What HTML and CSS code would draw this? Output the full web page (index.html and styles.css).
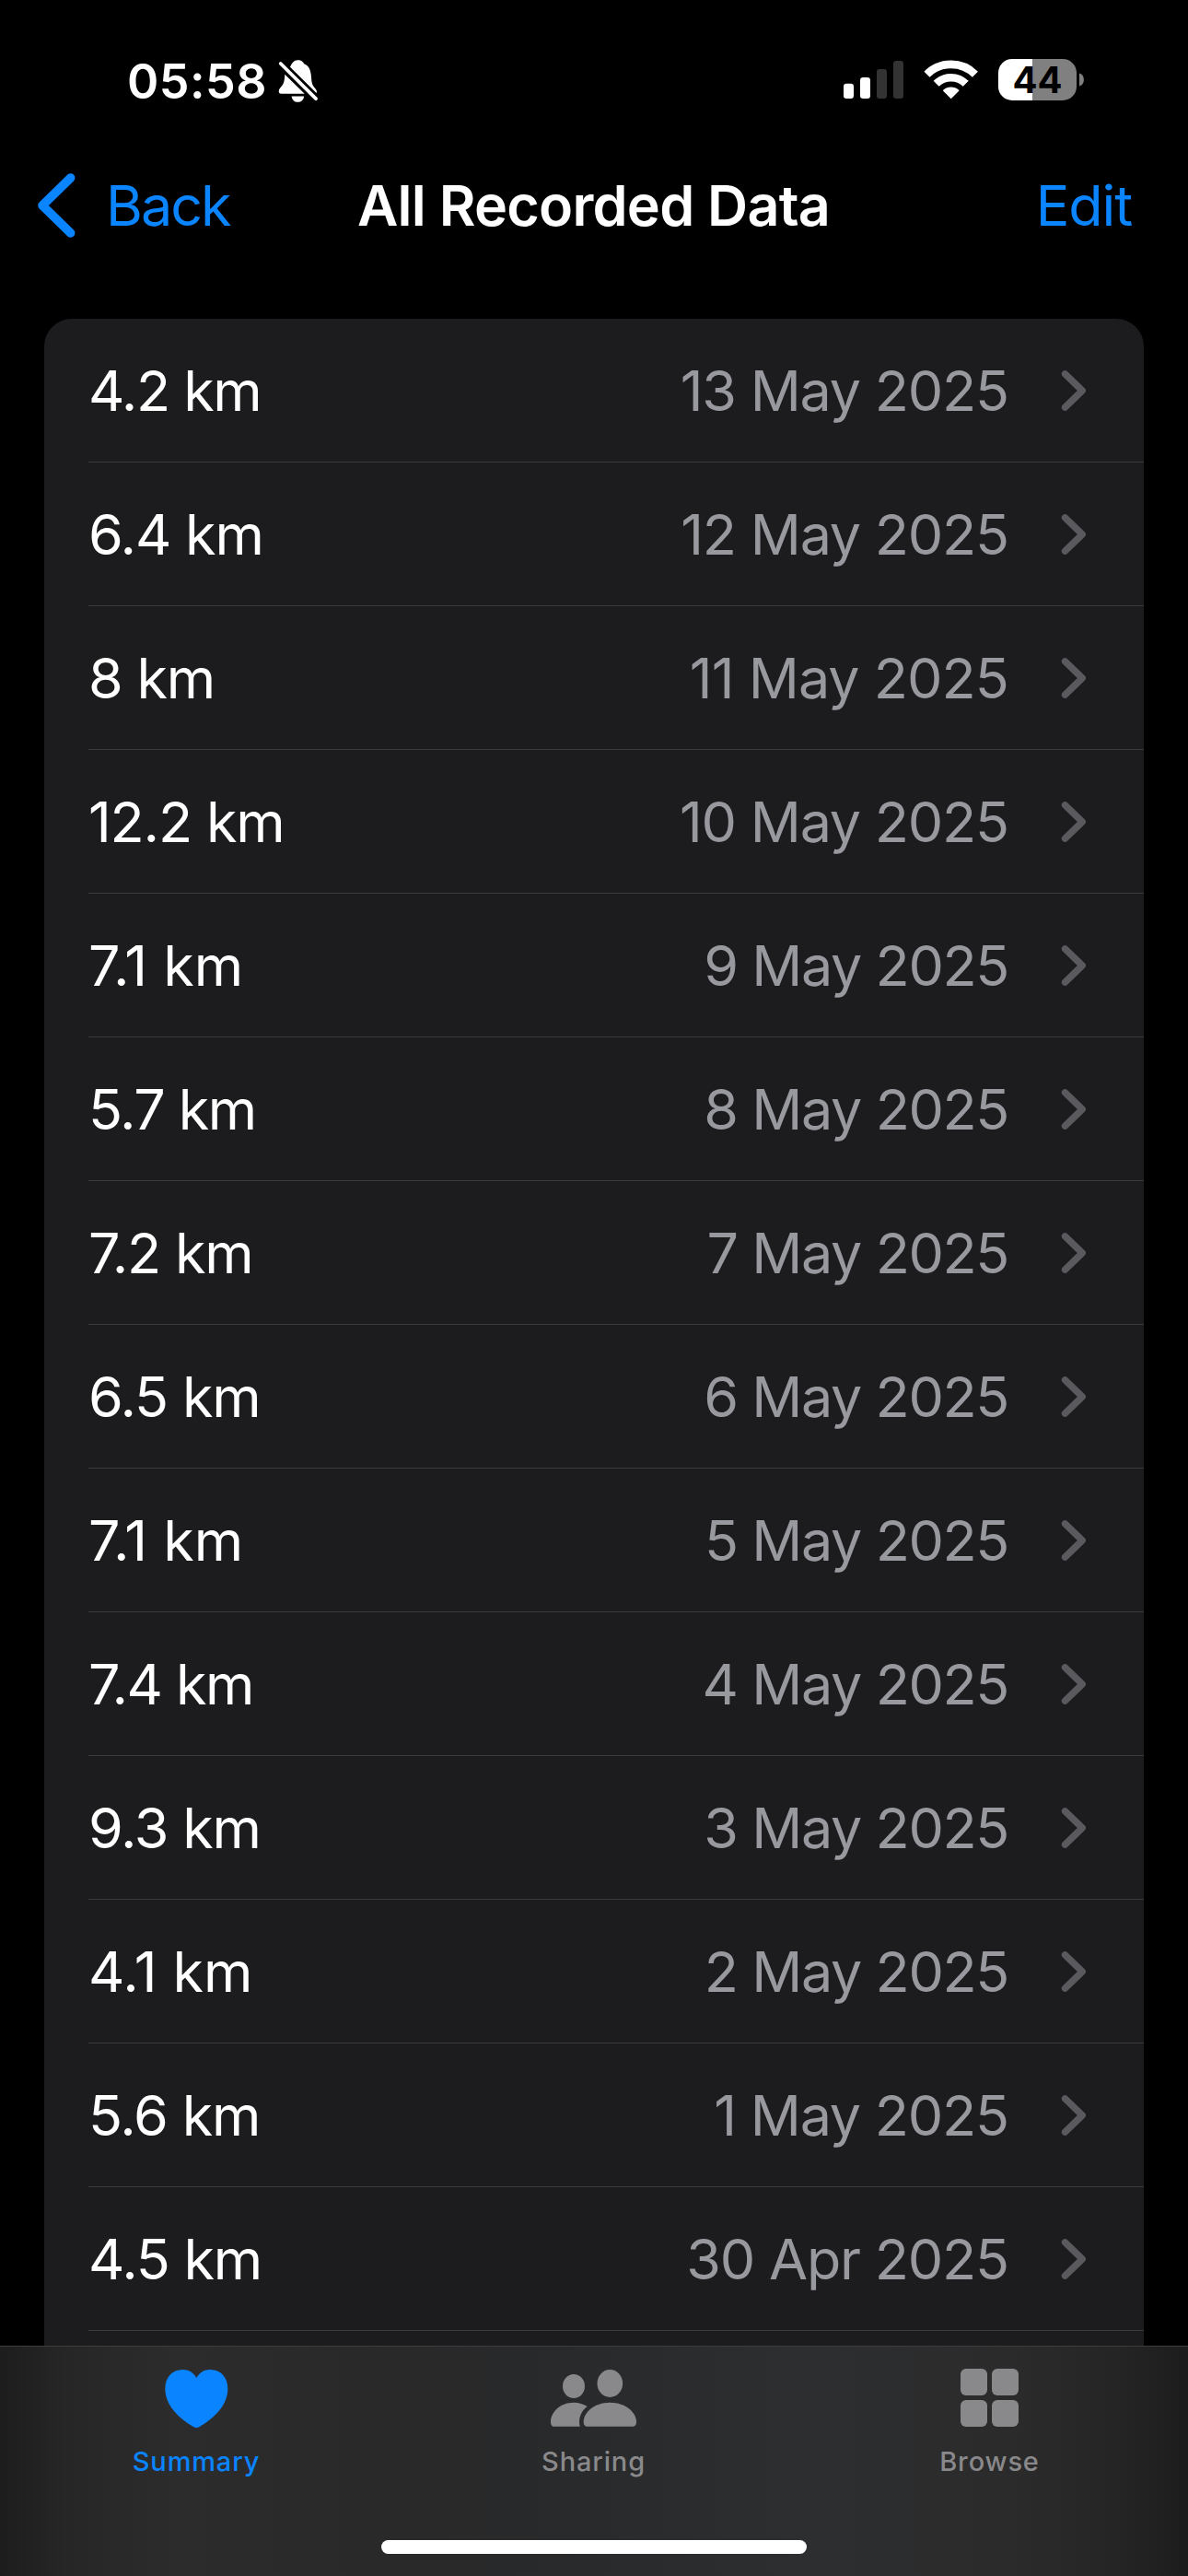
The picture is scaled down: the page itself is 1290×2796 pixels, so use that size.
FILE: index.html
```html
<!DOCTYPE html>
<html lang="en">
<head>
<meta charset="utf-8">
<title>All Recorded Data</title>
<link rel="stylesheet" href="styles.css">
</head>
<body>
<svg class="defs" width="0" height="0" aria-hidden="true">
  <symbol id="chevron" viewBox="0 0 28 46"><path d="M4.5 4.8L23.2 23L4.5 41.2" fill="none" stroke="currentColor" stroke-width="7.4" stroke-linecap="round" stroke-linejoin="round"/></symbol>
</svg>

<header class="status">
  <span class="time">05:58</span>
  <svg class="bell" width="44" height="52" viewBox="302 62 44 52" fill="#fff">
    <path d="M315 72.7C317 68.500 319 65.200 323.300 65.200C327.500 65.200 329.200 67.400 330.200 69.200C335.500 71.200 337.500 76 338 83.500C338.400 91 339.500 92.800 342.500 96.200C344.200 98.200 344.200 99.800 343.600 100.900Z"/>
    <path d="M309.300 80.700L330.700 101.700H305.500C302.300 101.700 302 98 304 95.700C307.500 91.500 308.900 90.200 309.300 80.700Z"/>
    <path d="M316.600 104.400H330.200C329.500 108.500 327 110.700 323.400 110.700C319.800 110.700 317.200 108.500 316.600 104.400Z"/>
    <path d="M304.700 69L343 107.200" stroke="#fff" stroke-width="3.800" stroke-linecap="round"/>
  </svg>
  <svg class="signal" width="66" height="52" viewBox="916 62 66 52">
    <rect x="916" y="90.800" width="11" height="16.200" rx="3.200" fill="#fff"/>
    <rect x="934" y="84" width="11" height="23" rx="3.200" fill="#fff"/>
    <rect x="952" y="75" width="11" height="32" rx="3.200" fill="#333"/>
    <rect x="970" y="66" width="11" height="41" rx="3.200" fill="#333"/>
  </svg>
  <svg class="wifi" width="60" height="52" viewBox="1003 62 60 52" fill="none" stroke="#fff">
    <path d="M1006.500 80.700A37 37 0 0 1 1058.900 80.700" stroke-width="8.600"/>
    <path d="M1016.650 90.850A22.700 22.700 0 0 1 1048.750 90.850" stroke-width="8.500"/>
    <path d="M1024.700 98.200A12 12 0 0 1 1040.700 98.200L1032.700 106.200Z" fill="#fff" stroke-width="1.400" stroke-linejoin="round"/>
  </svg>
  <div class="battery"><span class="level">44</span></div>
  <svg class="nub" width="5" height="52" viewBox="0 0 5 52"><path d="M0 17.500C6.500 19 6.500 30 0 31.500Z" fill="#808080"/></svg>
</header>

<nav class="navbar">
  <a class="back">
    <svg width="44" height="72" viewBox="0 0 44 72"><path d="M36.700 6L6 36L36.700 66" fill="none" stroke="currentColor" stroke-width="9.500" stroke-linecap="round" stroke-linejoin="round"/></svg>
    <span>Back</span>
  </a>
  <h1>All Recorded Data</h1>
  <a class="edit">Edit</a>
</nav>

<main>
  <ul class="card">
    <li><span class="val tight">4.2 km</span><span class="date">13 May 2025</span><svg><use href="#chevron"/></svg></li>
    <li><span class="val">6.4 km</span><span class="date">12 May 2025</span><svg><use href="#chevron"/></svg></li>
    <li><span class="val">8 km</span><span class="date wide">11 May 2025</span><svg><use href="#chevron"/></svg></li>
    <li><span class="val">12.2 km</span><span class="date">10 May 2025</span><svg><use href="#chevron"/></svg></li>
    <li><span class="val loose">7.1 km</span><span class="date short">9 May 2025</span><svg><use href="#chevron"/></svg></li>
    <li><span class="val tight">5.7 km</span><span class="date short">8 May 2025</span><svg><use href="#chevron"/></svg></li>
    <li><span class="val">7.2 km</span><span class="date short">7 May 2025</span><svg><use href="#chevron"/></svg></li>
    <li><span class="val">6.5 km</span><span class="date short">6 May 2025</span><svg><use href="#chevron"/></svg></li>
    <li><span class="val loose">7.1 km</span><span class="date short">5 May 2025</span><svg><use href="#chevron"/></svg></li>
    <li><span class="val tight">7.4 km</span><span class="date short">4 May 2025</span><svg><use href="#chevron"/></svg></li>
    <li><span class="val">9.3 km</span><span class="date short">3 May 2025</span><svg><use href="#chevron"/></svg></li>
    <li><span class="val loose">4.1 km</span><span class="date short">2 May 2025</span><svg><use href="#chevron"/></svg></li>
    <li><span class="val">5.6 km</span><span class="date">1 May 2025</span><svg><use href="#chevron"/></svg></li>
    <li><span class="val">4.5 km</span><span class="date">30 Apr 2025</span><svg><use href="#chevron"/></svg></li>
  </ul>
</main>

<footer class="tabbar">
  <div class="tabs">
    <a class="tab active">
      <svg width="69" height="66" viewBox="536 240 207 198"><path fill="currentColor" d="M639 273C648 256 664 246 684 246C718 246 741 272 741 308C741 358 702 401 649 432C645 434.500 642 435 639 435C636 435 633 434.500 629 432C576 401 537 358 537 308C537 272 560 246 594 246C614 246 630 256 639 273Z"/></svg>
      <span>Summary</span>
    </a>
    <a class="tab">
      <svg width="93" height="66" viewBox="504 240 279 198" fill="currentColor"><ellipse cx="579" cy="300" rx="36" ry="39"/><ellipse cx="697" cy="291" rx="41.500" ry="45"/><path d="M518 431.500C509 431.500 504 427 504 416C504 386 533 353 579 353C596 353 611 358 623 366C603 381 593 405 599 431.500Z"/><path d="M627 431.500C616 431.500 611 427 611 416C611 386 645 353 697 353C749 353 783 386 783 416C783 427 778 431.500 767 431.500Z"/></svg>
      <span>Sharing</span>
    </a>
    <a class="tab">
      <svg width="65" height="66" viewBox="546 240 195 198" fill="currentColor"><rect x="549" y="243" width="87" height="87" rx="18"/><rect x="651" y="243" width="87" height="87" rx="18"/><rect x="549" y="345" width="87" height="87" rx="18"/><rect x="651" y="345" width="87" height="87" rx="18"/></svg>
      <span>Browse</span>
    </a>
  </div>
  <div class="home"></div>
</footer>
</body>
</html>
```
FILE: styles.css
```css
* { box-sizing: border-box; }

body {
  margin: 0;
  width: 1290px;
  height: 2796px;
  display: flex;
  flex-direction: column;
  overflow: hidden;
  background: #000;
  color: #fff;
  font-family: Inter, "Liberation Sans", sans-serif;
  font-size: 61px;
}

svg { display: block; flex: none; }
.defs { display: none; }

/* Status bar */
.status {
  flex: none;
  display: flex;
  height: 160px;
  padding: 62px 113px 0 138px;
}
.time {
  width: 164px;
  font-size: 52px;
  font-weight: 600;
  line-height: 54px;
  letter-spacing: 0.5px;
}
.signal { margin-left: auto; }
.wifi { margin-left: 21px; }
.battery {
  display: flex;
  justify-content: center;
  width: 85px;
  height: 45px;
  margin: 2px 0 0 21px;
  border-radius: 15px;
  background: linear-gradient(90deg, #fff 37px, #808080 37px);
  color: #000;
}
.level {
  font-size: 40px;
  font-weight: 700;
  line-height: 45px;
}
.nub { margin-left: 3px; }

/* Navigation bar */
.navbar {
  flex: none;
  display: grid;
  grid-template-columns: 1fr auto 1fr;
  align-items: center;
  height: 126px;
  padding: 0 61px 0 40px;
}
.back { display: flex; align-items: center; color: #0a84ff; }
.back span { margin-left: 31px; letter-spacing: -2px; }
.edit { justify-self: end; color: #0a84ff; letter-spacing: -1.1px; }
h1 {
  margin: 0 0 0 20px;
  font-size: 61px;
  font-weight: 600;
  letter-spacing: -0.75px;
}

/* Data list */
main {
  flex: 1;
  min-height: 0;
  padding: 60px 48px 0;
}
.card {
  height: 100%;
  margin: 0;
  padding: 0 0 0 48px;
  list-style: none;
  border-radius: 30px 30px 0 0;
  background: #1c1c1e;
}
.card li {
  display: flex;
  align-items: center;
  height: 156px;
  padding-right: 62px;
  border-bottom: 1px solid #3b3b3d;
}
.val { letter-spacing: -1.2px; }
.val.tight { letter-spacing: -1.5px; }
.val.loose { letter-spacing: 0; }
.date {
  margin-left: auto;
  color: #98989f;
  letter-spacing: -1.2px;
}
.date.short { letter-spacing: -1.4px; }
.date.wide { letter-spacing: -0.95px; }
.card svg {
  width: 28px;
  height: 46px;
  margin-left: 57px;
  color: #5a5a5e;
}

/* Tab bar */
.tabbar {
  flex: none;
  display: flex;
  flex-direction: column;
  align-items: center;
  height: 250px;
  border-top: 1px solid #3d3d3f;
  background: linear-gradient(90deg, #1d1d1e 0, #262627 70px, #2c2c2d 190px, #29292a 430px, #292a2b 620px, #2d2e2f 880px, #2b2b2c 1100px, #252525 1210px, #1c1c1c 1290px);
}
.tabs {
  align-self: flex-start;
  display: grid;
  grid-template-columns: 426px 437px 423px;
  height: 210px;
}
.tab {
  display: flex;
  flex-direction: column;
  align-items: center;
  padding-top: 23px;
  color: #89898b;
}
.tab span {
  margin-top: 18px;
  font-size: 29px;
  font-weight: 500;
  line-height: 36px;
  letter-spacing: 0.85px;
}
.tab.active { color: #0a84ff; }
.home {
  width: 462px;
  height: 15px;
  border-radius: 8px;
  background: #fff;
}
```
